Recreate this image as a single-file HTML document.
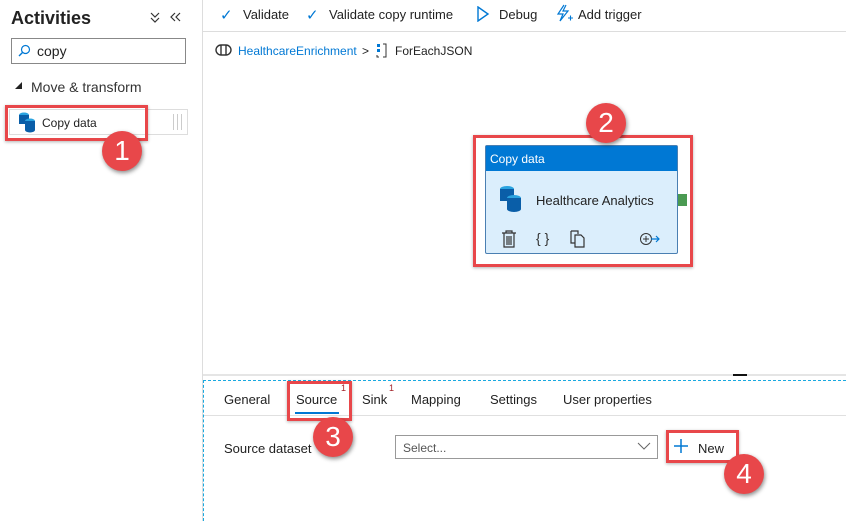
<!DOCTYPE html>
<html><head><style>
*{margin:0;padding:0;box-sizing:border-box}
body{width:846px;height:521px;overflow:hidden;background:#fff;font-family:"Liberation Sans",sans-serif;position:relative;color:#222}
.a{position:absolute}
.red{position:absolute;border:3px solid #e8474a;box-shadow:0 1px 3px rgba(0,0,0,.3)}
.num{position:absolute;width:40px;height:40px;border-radius:50%;background:#e8474a;color:#fff;font-size:28px;text-align:center;line-height:40px;box-shadow:1px 2px 4px rgba(0,0,0,.45)}
.t{font-size:13px;white-space:nowrap}
</style></head><body>
<div class="a" style="left:202px;top:0;width:1px;height:521px;background:#ddd"></div>
<div class="a" style="left:11px;top:8px;font-size:18px;font-weight:bold;color:#222">Activities</div>
<svg class="a" style="left:150px;top:12px" width="10" height="12"><path d="M1 1l4 4 4-4M1 6l4 4 4-4" fill="none" stroke="#333" stroke-width="1.2"/></svg>
<svg class="a" style="left:170px;top:12px" width="12" height="10"><path d="M5 1L1 5l4 4M10 1L6 5l4 4" fill="none" stroke="#333" stroke-width="1.2"/></svg>
<div class="a" style="left:11px;top:38px;width:175px;height:26px;border:1px solid #888"></div>
<svg class="a" style="left:17px;top:44px" width="14" height="14"><circle cx="8.5" cy="5.5" r="4" fill="none" stroke="#0078d4" stroke-width="1.2"/><path d="M5.5 8.5L2 12" stroke="#0078d4" stroke-width="1.4"/></svg>
<div class="a t" style="left:37px;top:43px;font-size:14px">copy</div>
<svg class="a" style="left:15px;top:82px" width="8" height="8"><path d="M7 0V7H0Z" fill="#222"/></svg>
<div class="a t" style="left:31px;top:79px;font-size:14px;color:#333">Move &amp; transform</div>
<div class="a" style="left:9px;top:109px;width:179px;height:26px;border:1px solid #ddd"></div>
<div class="a" style="left:173px;top:114px;width:1px;height:16px;background:#ccc"></div>
<div class="a" style="left:177px;top:114px;width:1px;height:16px;background:#ccc"></div>
<div class="a" style="left:181px;top:114px;width:1px;height:16px;background:#ccc"></div>
<svg class="a" style="left:17px;top:111px" width="20" height="22"><ellipse cx="7" cy="4" rx="5" ry="2.5" fill="#2aa3e0"/><rect x="2" y="4" width="10" height="9" fill="#0a5ea8"/><ellipse cx="13" cy="10" rx="5" ry="2.5" fill="#2aa3e0"/><rect x="8" y="10" width="10" height="9" fill="#0a5ea8"/><ellipse cx="13" cy="19" rx="5" ry="2.5" fill="#0a5ea8"/></svg>
<div class="a t" style="left:42px;top:116px;font-size:12px">Copy data</div>
<div class="red" style="left:5px;top:105px;width:143px;height:36px"></div>
<div class="num" style="left:102px;top:131px">1</div>

<div class="a" style="left:203px;top:31px;width:643px;height:1px;background:#ddd"></div>
<div class="a t" style="left:220px;top:6px;color:#0078d4;font-size:15px">✓</div>
<div class="a t" style="left:243px;top:7px">Validate</div>
<div class="a t" style="left:306px;top:6px;color:#0078d4;font-size:15px">✓</div>
<div class="a t" style="left:329px;top:7px">Validate copy runtime</div>
<svg class="a" style="left:476px;top:6px" width="14" height="16"><path d="M2 1L12 8L2 15Z" fill="none" stroke="#0078d4" stroke-width="1.4"/></svg>
<div class="a t" style="left:499px;top:7px">Debug</div>
<svg class="a" style="left:555px;top:4px" width="18" height="19"><path d="M9 1L3 10h5l-3 7 8-10H8l3-6" fill="none" stroke="#0078d4" stroke-width="1.2"/><path d="M13 14h5M15.5 11.5v5" stroke="#0078d4" stroke-width="1.1"/></svg>
<div class="a t" style="left:578px;top:7px">Add trigger</div>
<svg class="a" style="left:215px;top:44px" width="18" height="12"><rect x="1" y="1" width="15" height="10" rx="5" fill="none" stroke="#333" stroke-width="1.4"/><path d="M6 1v10M11 1v10" stroke="#333" stroke-width="1.4"/></svg>
<div class="a t" style="left:238px;top:44px;font-size:12px;color:#0078d4">HealthcareEnrichment</div>
<div class="a t" style="left:362px;top:44px;font-size:12px">&gt;</div>
<svg class="a" style="left:376px;top:43px" width="12" height="15"><rect x="1" y="1" width="3" height="3" fill="#0078d4"/><rect x="1" y="6" width="3" height="3" fill="#0078d4"/><path d="M1 12v2h2M7 1h3v13H7" fill="none" stroke="#333"/></svg>
<div class="a t" style="left:395px;top:44px;font-size:12px">ForEachJSON</div>

<div class="a" style="left:485px;top:145px;width:193px;height:109px;background:#dbeefc;border:1px solid #4a7fb2;border-radius:2px"></div>
<div class="a" style="left:486px;top:146px;width:191px;height:25px;background:#0078d4;color:#fff;font-size:12px;padding:6px 0 0 4px">Copy data</div>
<div class="a" style="left:678px;top:194px;width:9px;height:12px;background:#4a9a52"></div>
<svg class="a" style="left:497px;top:184px" width="28" height="30"><ellipse cx="10" cy="5" rx="7" ry="3" fill="#2aa3e0"/><rect x="3" y="5" width="14" height="12" fill="#0a5ea8"/><ellipse cx="17" cy="14" rx="7" ry="3" fill="#2aa3e0"/><rect x="10" y="14" width="14" height="11" fill="#0a5ea8"/><ellipse cx="17" cy="25" rx="7" ry="3" fill="#0a5ea8"/></svg>
<div class="a t" style="left:536px;top:193px">Healthcare Analytics</div>
<svg class="a" style="left:501px;top:230px" width="16" height="18"><path d="M1 3h14M5 3V1h6v2M3 3v14h10V3M6 6v9M8 6v9M10 6v9" fill="none" stroke="#333" stroke-width="1.2"/></svg>
<div class="a t" style="left:536px;top:230px;font-size:14px;color:#333">{ }</div>
<svg class="a" style="left:570px;top:230px" width="16" height="18"><path d="M1 1h7v3M1 1v12h4M5 5h6l3 3v9H5Z" fill="none" stroke="#333" stroke-width="1.2"/></svg>
<svg class="a" style="left:639px;top:232px" width="22" height="14"><circle cx="7" cy="7" r="5.5" fill="none" stroke="#333"/><path d="M4 7h6M7 4v6" stroke="#333"/><path d="M12 7h8M17 4l3 3-3 3" fill="none" stroke="#0078d4" stroke-width="1.2"/></svg>
<div class="red" style="left:473px;top:135px;width:220px;height:132px"></div>
<div class="num" style="left:586px;top:103px">2</div>

<div class="a" style="left:203px;top:374px;width:643px;height:2px;background:#e5e5e5"></div>
<div class="a" style="left:733px;top:374px;width:14px;height:2px;background:#111"></div>
<div class="a" style="left:203px;top:380px;width:643px;border-top:1px dashed #19a9e0"></div>
<div class="a" style="left:203px;top:380px;height:141px;border-left:1px dashed #19a9e0"></div>
<div class="a" style="left:204px;top:415px;width:642px;height:1px;background:#e0e0e0"></div>
<div class="a t" style="left:224px;top:392px">General</div>
<div class="a t" style="left:296px;top:392px">Source</div>
<div class="a" style="left:341px;top:383px;font-size:9px;color:#a4262c">1</div>
<div class="a" style="left:295px;top:412px;width:44px;height:2px;background:#0078d4"></div>
<div class="a t" style="left:362px;top:392px">Sink</div>
<div class="a" style="left:389px;top:383px;font-size:9px;color:#a4262c">1</div>
<div class="a t" style="left:411px;top:392px">Mapping</div>
<div class="a t" style="left:490px;top:392px">Settings</div>
<div class="a t" style="left:563px;top:392px">User properties</div>
<div class="red" style="left:287px;top:381px;width:65px;height:40px"></div>
<div class="num" style="left:313px;top:417px">3</div>
<div class="a t" style="left:224px;top:441px">Source dataset</div>
<div class="a" style="left:395px;top:435px;width:263px;height:24px;border:1px solid #999"></div>
<div class="a t" style="left:403px;top:441px;font-size:12px;color:#555">Select...</div>
<svg class="a" style="left:637px;top:442px" width="14" height="9"><path d="M1 1l6 6 6-6" fill="none" stroke="#666"/></svg>
<svg class="a" style="left:673px;top:438px" width="16" height="16"><path d="M8 1v14M1 8h14" stroke="#0078d4" stroke-width="1.5"/></svg>
<div class="a t" style="left:698px;top:441px">New</div>
<div class="red" style="left:666px;top:430px;width:73px;height:33px"></div>
<div class="num" style="left:724px;top:454px">4</div>
</body></html>
